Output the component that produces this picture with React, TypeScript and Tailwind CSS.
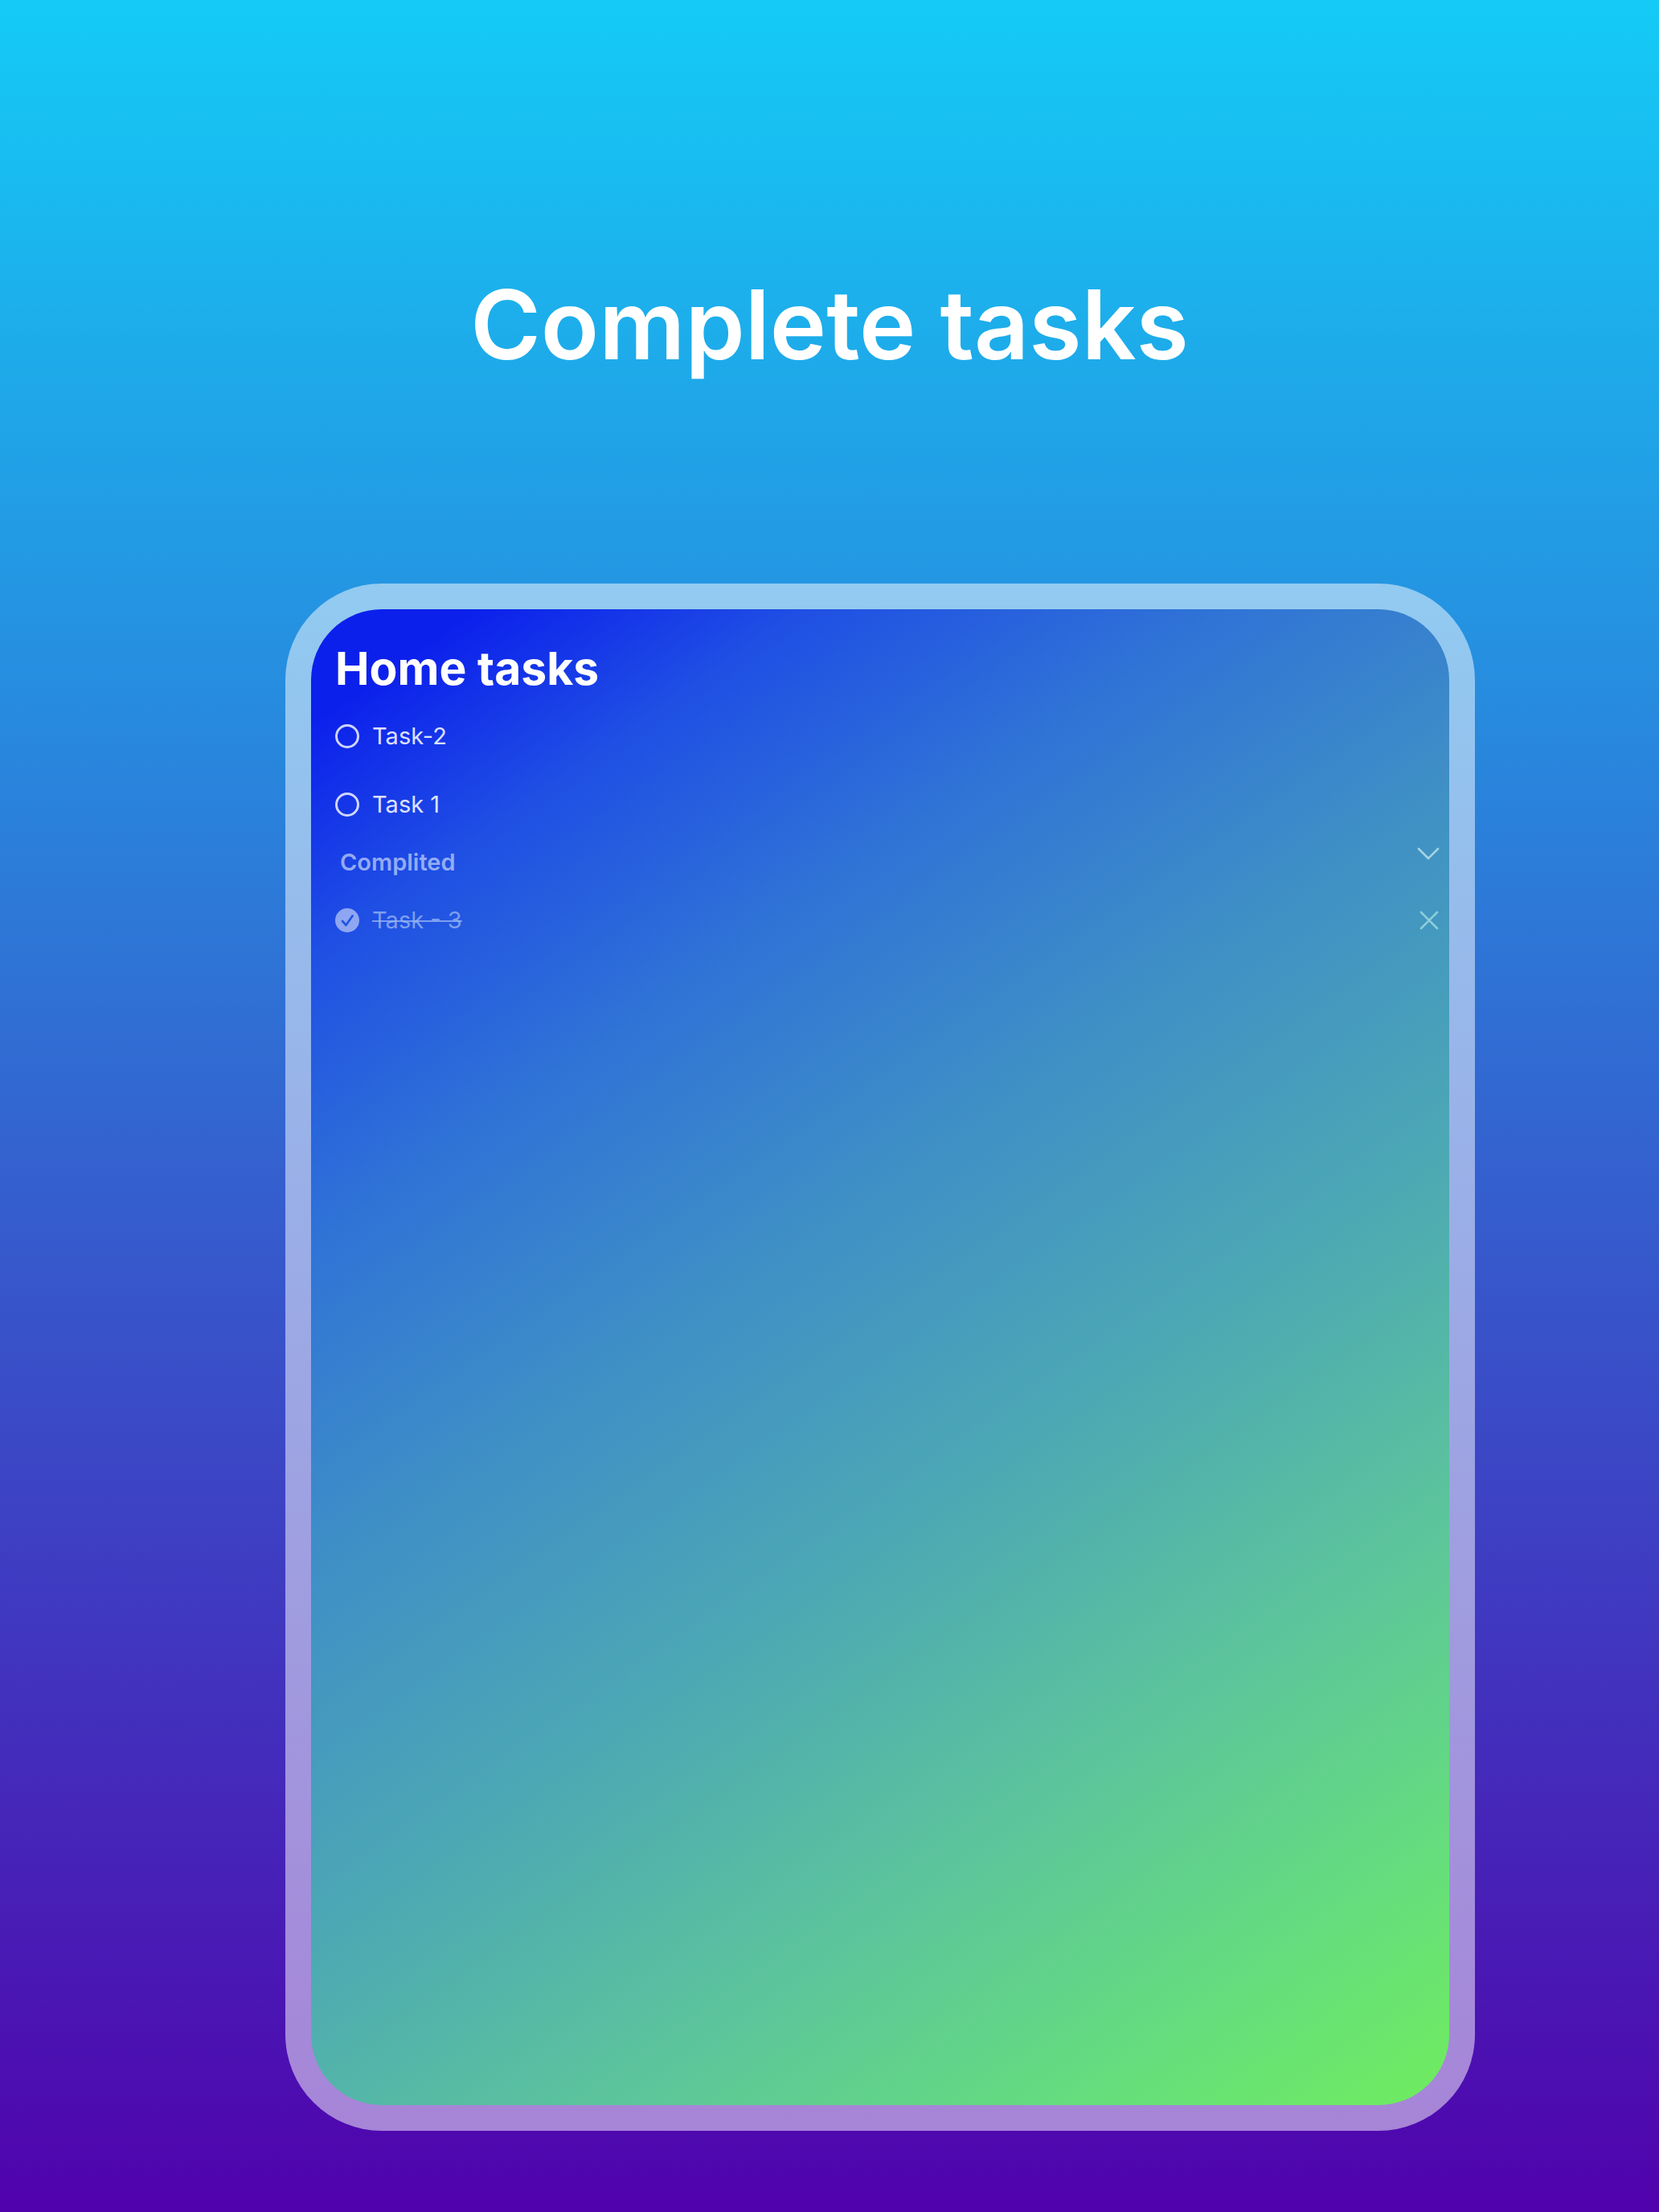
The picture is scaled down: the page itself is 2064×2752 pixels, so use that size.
import { useState } from 'react'

interface Task {
  id: string
  title: string
}

const OPEN_TASKS: Task[] = [
  { id: 'task-2', title: 'Task-2' },
  { id: 'task-1', title: 'Task 1' },
]

const DONE_TASKS: Task[] = [{ id: 'task-3', title: 'Task - 3' }]

function OpenTask({ task }: { task: Task }) {
  return (
    <li className="flex h-[85px] items-center gap-4">
      <input
        id={task.id}
        type="checkbox"
        className="size-[30px] appearance-none rounded-full border-3 border-white/80"
      />
      <label htmlFor={task.id} className="text-[29px] leading-10 text-white/85">
        {task.title}
      </label>
    </li>
  )
}

function DoneTask({ task, onRemove }: { task: Task; onRemove: () => void }) {
  return (
    <li className="flex h-[60px] items-center gap-4">
      <span className="grid size-[30px] place-items-center">
        <input
          id={task.id}
          type="checkbox"
          defaultChecked
          className="col-start-1 row-start-1 size-[30px] appearance-none rounded-full bg-white/50"
        />
        <svg viewBox="0 0 30 30" className="pointer-events-none col-start-1 row-start-1 size-[30px]" fill="none" aria-hidden="true">
          <path d="M9 16l4.5 5L21.5 9.5" stroke="#2456e0" strokeWidth="2.8" strokeLinecap="round" strokeLinejoin="round" />
        </svg>
      </span>
      <label htmlFor={task.id} className="text-[29px] leading-10 text-[#9cb8f4]/75 line-through decoration-2">
        {task.title}
      </label>
      <button type="button" aria-label="Remove task" onClick={onRemove} className="ml-auto text-[#a6e0e4]/75">
        <svg viewBox="0 0 26 26" className="size-[26px]" fill="none" stroke="currentColor" strokeWidth="2.6" strokeLinecap="round" aria-hidden="true">
          <path d="M3 3l20 20M23 3L3 23" />
        </svg>
      </button>
    </li>
  )
}

function TaskScreen() {
  const [done, setDone] = useState(DONE_TASKS)
  const [expanded, setExpanded] = useState(true)

  return (
    <section className="min-h-[1861px] rounded-[88px] bg-[linear-gradient(145deg,#0c20ec_5%,#1f4fe4_15%,#3074d6_28%,#3f8fc6_42%,#4ca8b4_58%,#5cc49c_74%,#66de7c_89%,#70ec5e_100%)] pt-[34px] pr-3 pl-[30px] font-['Inter','Liberation_Sans',sans-serif]">
      <h2 className="mb-px text-[57px] leading-[80px] font-bold text-white">Home tasks</h2>
      <ul>
        {OPEN_TASKS.map((t) => (
          <OpenTask key={t.id} task={t} />
        ))}
      </ul>
      <div className="flex h-[60px] items-start justify-between pl-[6px]">
        <h3 className="text-[29px] leading-[60px] font-semibold text-[#bccdf8]/75">Complited</h3>
        <button
          type="button"
          aria-label="Toggle completed"
          aria-expanded={expanded}
          onClick={() => setExpanded((v) => !v)}
          className="pt-[10px] text-[#c4e8f0]/75"
        >
          <svg viewBox="0 0 28 28" className="size-7" fill="none" stroke="currentColor" strokeWidth="2.6" strokeLinecap="round" strokeLinejoin="round" aria-hidden="true">
            <path d="M2 3l12 12 12-12" />
          </svg>
        </button>
      </div>
      {expanded && (
        <ul className="pt-3">
          {done.map((t) => (
            <DoneTask key={t.id} task={t} onRemove={() => setDone((d) => d.filter((x) => x.id !== t.id))} />
          ))}
        </ul>
      )}
    </section>
  )
}

export default function App() {
  return (
    <main className="min-h-screen bg-[linear-gradient(180deg,#14cbf6,#5002ac)] pb-[101px]">
      <h1 className="pt-[320px] text-center font-['Inter','Liberation_Sans',sans-serif] text-[119px] leading-[168px] font-semibold text-white">
        Complete tasks
      </h1>
      <div className="mt-[238px] mr-[11.1%] ml-[17.2%] rounded-[120px] bg-white/50 p-8">
        <TaskScreen />
      </div>
    </main>
  )
}
